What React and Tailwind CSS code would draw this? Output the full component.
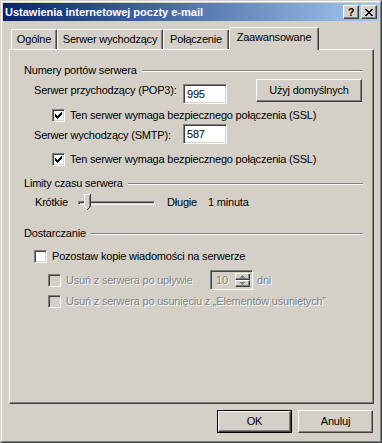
import React from "react";

const raised =
    "border border-t-white border-l-white border-r-[#404040] border-b-[#404040] shadow-[inset_-1px_-1px_0_#808080]";
const sunken =
    "border border-t-[#808080] border-l-[#808080] border-r-white border-b-white shadow-[inset_1px_1px_0_#404040,inset_-1px_-1px_0_#d4d0c8]";

function Check({ checked, disabled }) {
    return (
        <div className={`w-[13px] h-[13px] shrink-0 flex items-start justify-start ${sunken} ${disabled ? "bg-[#d4d0c8]" : "bg-white"}`}>
            {checked && (
                <svg width="7" height="7" viewBox="0 0 7 7" className="mt-[2px] ml-[2px]" shapeRendering="crispEdges">
                    <rect x="0" y="2" width="1" height="3" fill="#000" />
                    <rect x="1" y="3" width="1" height="3" fill="#000" />
                    <rect x="2" y="4" width="1" height="3" fill="#000" />
                    <rect x="3" y="3" width="1" height="3" fill="#000" />
                    <rect x="4" y="2" width="1" height="3" fill="#000" />
                    <rect x="5" y="1" width="1" height="3" fill="#000" />
                    <rect x="6" y="0" width="1" height="3" fill="#000" />
                </svg>
            )}
        </div>
    );
}

function Section({ title, className }) {
    return (
        <div className={`flex items-center h-[13px] ml-[14px] mr-[10px] ${className}`}>
            <span className="leading-[13px] whitespace-nowrap">{title}</span>
            <div className="flex-1 ml-[5px] h-[2px] border-t border-t-[#808080] border-b border-b-white" />
        </div>
    );
}

function TextBox({ value }) {
    return (
        <div className={`w-[44px] h-[20px] bg-white ${sunken} pl-[3px] leading-[17px] pt-[1px]`}>{value}</div>
    );
}

const dis = "text-[#808080] [text-shadow:1px_1px_0_#ffffff]";

export default function App() {
    const tabs = [
        { label: "Ogólne", w: "w-[46px]" },
        { label: "Serwer wychodzący", w: "w-[106px]" },
        { label: "Połączenie", w: "w-[66px]" },
    ];

    return (
        <div className="w-[382px] h-[443px] bg-[#d4d0c8] font-['Liberation_Sans',Arial,sans-serif] text-[11px] tracking-[-0.2px] text-black border border-t-[#d4d0c8] border-l-[#d4d0c8] border-r-[#404040] border-b-[#404040] select-none">
            <div className="w-full h-full border border-t-white border-l-white border-r-[#808080] border-b-[#808080] p-px flex flex-col">
                {/* pasek tytułu */}
                <div className="h-[18px] shrink-0 flex items-center bg-gradient-to-r from-[#0a246a] to-[#a6caf0] pl-[2px] pr-[2px]">
                    <span className="text-white font-bold text-[11px] tracking-normal leading-[13px] whitespace-nowrap">Ustawienia internetowej poczty e-mail</span>
                    <div className="ml-auto flex gap-[2px]">
                        <div className={`w-[16px] h-[14px] bg-[#d4d0c8] ${raised} flex items-center justify-center font-bold text-[11px] leading-none`}>?</div>
                        <div className={`w-[16px] h-[14px] bg-[#d4d0c8] ${raised} flex items-center justify-center`}>
                            <svg width="8" height="7" viewBox="0 0 8 7" shapeRendering="crispEdges">
                                <path d="M0 0h2v1h-2zM6 0h2v1h-2zM1 1h2v1h-2zM5 1h2v1h-2zM2 2h4v1h-4zM3 3h2v1h-2zM2 4h4v1h-4zM1 5h2v1h-2zM5 5h2v1h-2zM0 6h2v1h-2zM6 6h2v1h-2z" fill="#000" />
                            </svg>
                        </div>
                    </div>
                </div>

                {/* zakładki */}
                <div className="flex items-end ml-[8px] mt-[6px] h-[22px] relative z-10">
                    {tabs.map((t) => (
                        <div key={t.label} className={`${t.w} h-[20px] border-t border-l border-t-white border-l-white border-r border-r-[#404040] shadow-[inset_-1px_0_0_#808080] rounded-t-[2px] flex items-center justify-center leading-[13px] pb-[1px] whitespace-nowrap`}>
                            {t.label}
                        </div>
                    ))}
                    <div className="w-[90px] h-[23px] -mb-px bg-[#d4d0c8] border-t border-l border-t-white border-l-white border-r border-r-[#404040] shadow-[inset_-1px_0_0_#808080] rounded-t-[2px] flex items-start justify-center pt-[3px] leading-[13px] whitespace-nowrap">
                        Zaawansowane
                    </div>
                </div>

                {/* panel */}
                <div className="ml-[6px] w-[365px] h-[355px] border border-t-white border-l-white border-r-[#404040] border-b-[#404040] shadow-[inset_-1px_-1px_0_#808080] flex flex-col">
                    <Section title="Numery portów serwera" className="mt-[14px]" />

                    <div className="flex items-start mt-[2px] h-[25px] ml-[24px]">
                        <span className="w-[149px] mt-[5px] leading-[13px]">Serwer przychodzący (POP3):</span>
                        <div className="mt-[5px]"><TextBox value="995" /></div>
                        <div className={`ml-[29px] w-[106px] h-[23px] ${raised} flex items-center justify-center leading-[13px]`}>Użyj domyślnych</div>
                    </div>

                    <div className="flex items-center mt-[5px] h-[13px] ml-[42px] gap-[5px]">
                        <Check checked />
                        <span className="leading-[13px]">Ten serwer wymaga bezpiecznego połączenia (SSL)</span>
                    </div>

                    <div className="flex items-start mt-[2px] h-[20px] ml-[24px]">
                        <span className="w-[149px] mt-[5px] leading-[13px]">Serwer wychodzący (SMTP):</span>
                        <TextBox value="587" />
                    </div>

                    <div className="flex items-center mt-[9px] h-[13px] ml-[42px] gap-[5px]">
                        <Check checked />
                        <span className="leading-[13px]">Ten serwer wymaga bezpiecznego połączenia (SSL)</span>
                    </div>

                    <Section title="Limity czasu serwera" className="mt-[11px]" />

                    <div className="flex items-center mt-[4px] h-[17px] ml-[25px]">
                        <span className="w-[43px] leading-[13px]">Krótkie</span>
                        <div className="relative w-[77px] h-[17px] flex items-center">
                            <div className="w-full h-[4px] border border-t-[#808080] border-l-[#808080] border-r-white border-b-white shadow-[inset_1px_1px_0_#404040]" />
                            <svg className="absolute left-[6px] top-0" width="7" height="17" viewBox="0 0 7 17" shapeRendering="crispEdges">
                                <path d="M0 0h7v13l-3 3h-1l-3-3z" fill="#d4d0c8" />
                                <rect x="0" y="0" width="6" height="1" fill="#fff" />
                                <rect x="0" y="0" width="1" height="13" fill="#fff" />
                                <rect x="6" y="0" width="1" height="13" fill="#404040" />
                                <rect x="5" y="1" width="1" height="12" fill="#808080" />
                                <rect x="1" y="13" width="1" height="1" fill="#fff" />
                                <rect x="2" y="14" width="1" height="1" fill="#fff" />
                                <rect x="5" y="13" width="1" height="1" fill="#404040" />
                                <rect x="4" y="14" width="1" height="1" fill="#404040" />
                                <rect x="3" y="15" width="1" height="1" fill="#404040" />
                            </svg>
                        </div>
                        <span className="ml-[12px] w-[41px] leading-[13px]">Długie</span>
                        <span className="leading-[13px]">1 minuta</span>
                    </div>

                    <Section title="Dostarczanie" className="mt-[16px]" />

                    <div className="flex items-center mt-[10px] h-[13px] ml-[24px] gap-[5px]">
                        <Check />
                        <span className="leading-[13px]">Pozostaw kopie wiadomości na serwerze</span>
                    </div>

                    <div className="flex items-center mt-[7px] h-[20px] ml-[38px]">
                        <Check disabled />
                        <span className={`ml-[5px] w-[144px] leading-[13px] ${dis}`}>Usuń z serwera po upływie</span>
                        <div className={`w-[43px] h-[20px] ${sunken} flex items-stretch p-[2px]`}>
                            <span className={`flex-1 pl-[3px] leading-[14px] ${dis}`}>10</span>
                            <div className="w-[15px] flex flex-col">
                                <div className={`flex-1 ${raised} flex items-center justify-center`}>
                                    <svg width="5" height="3" viewBox="0 0 5 3"><path d="M2 0h1v1h1v1h1v1H0V2h1V1h1z" fill="#808080" /></svg>
                                </div>
                                <div className={`flex-1 ${raised} flex items-center justify-center`}>
                                    <svg width="5" height="3" viewBox="0 0 5 3"><path d="M0 0h5v1H4v1H3v1H2V2H1V1H0z" fill="#808080" /></svg>
                                </div>
                            </div>
                        </div>
                        <span className={`ml-[4px] leading-[13px] ${dis}`}>dni</span>
                    </div>

                    <div className="flex items-center mt-[5px] h-[13px] ml-[38px] gap-[5px]">
                        <Check disabled />
                        <span className={`leading-[13px] ${dis}`}>Usuń z serwera po usunięciu z „Elementów usuniętych”</span>
                    </div>
                </div>

                {/* przyciski */}
                <div className="flex justify-end gap-[6px] mt-[6px] pr-[6px]">
                    <div className="w-[75px] h-[23px] border border-black">
                        <div className={`w-full h-full ${raised} flex items-center justify-center leading-[13px]`}>OK</div>
                    </div>
                    <div className={`w-[75px] h-[23px] ${raised} flex items-center justify-center leading-[13px]`}>Anuluj</div>
                </div>
            </div>
        </div>
    );
}
